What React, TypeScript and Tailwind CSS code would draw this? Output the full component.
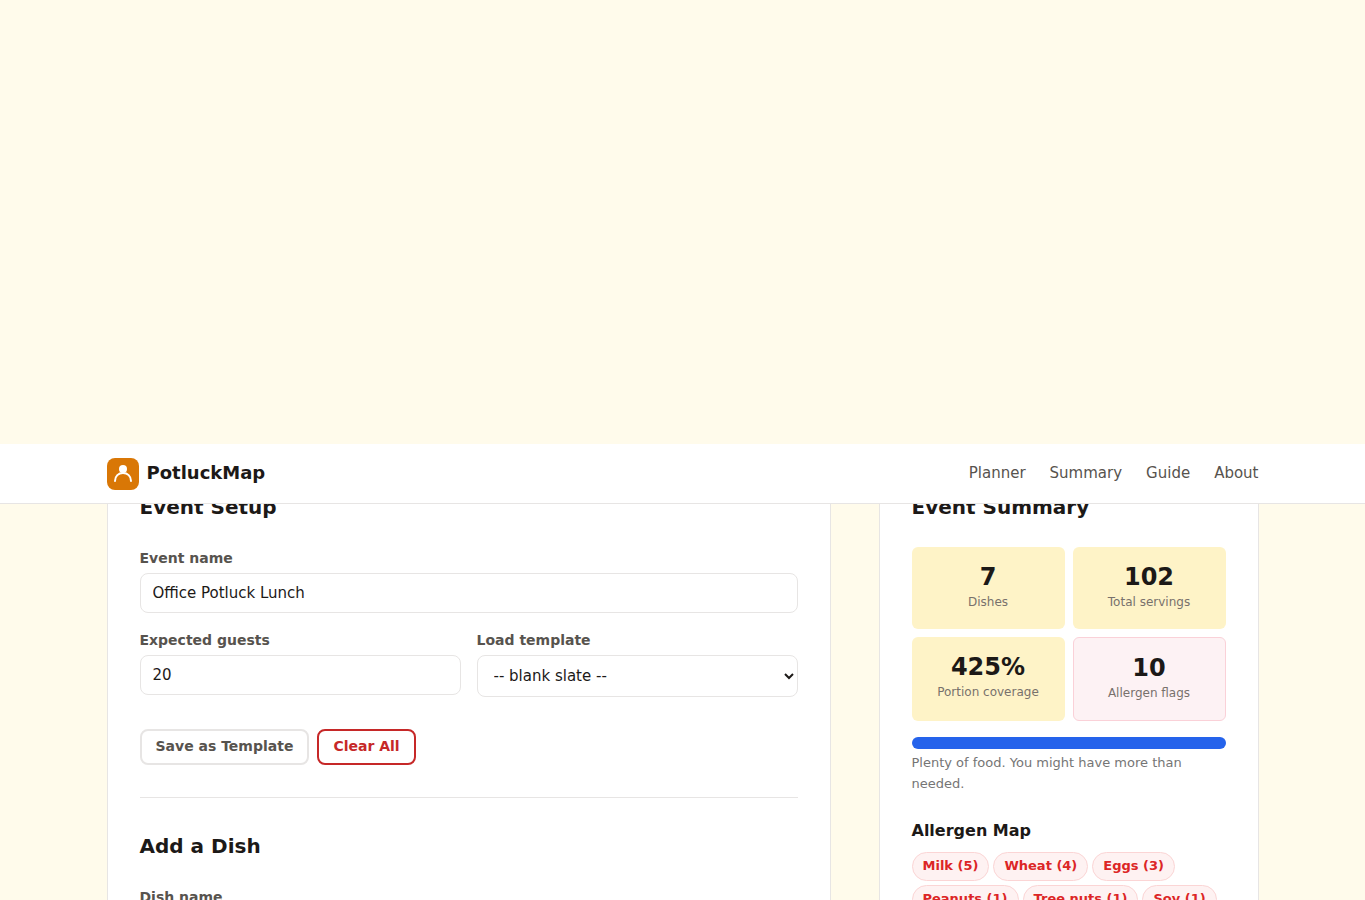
const Label = ({ children }: { children: React.ReactNode }) => (
  <label className="block mb-1 text-sm font-bold leading-[21px] text-[#57534e]">{children}</label>
);

const inputCls =
  "block w-full h-10 px-3 text-[15px] text-[#1c1917] bg-white border border-[#e7e5e4] rounded-lg outline-none";

const Stat = ({ value, label, warn }: { value: string; label: string; warn?: boolean }) => (
  <div
    className={
      warn
        ? "flex flex-col items-center rounded-md border border-[#fad1d8] bg-[#fdf2f4] pt-3 h-[84px]"
        : "flex flex-col items-center rounded-md bg-[#fef3c7] pt-3 pb-[18px]"
    }
  >
    <div className="text-2xl font-bold leading-9 text-[#1c1917]">{value}</div>
    <div className="-mt-0.5 text-xs leading-[18px] text-[#78716c]">{label}</div>
  </div>
);

const Pill = ({ children }: { children: React.ReactNode }) => (
  <span className="rounded-full border border-[#fbd5d5] bg-[#fef2f2] px-2.5 pt-1 pb-1.5 text-[13px] font-bold leading-[17px] text-[#dc2626]">
    {children}
  </span>
);

export default function App() {
  return (
    <div className="h-[900px] overflow-hidden bg-[#fffbeb] font-['DejaVu_Sans',sans-serif]">
      <div className="h-[444px]" />

      {/* Header */}
      <header className="relative z-10 h-[60px] bg-white border-b border-[#e7e5e4]">
        <div className="mx-auto flex h-full max-w-6xl items-center justify-between">
          <div className="flex items-center gap-2">
            <div className="flex h-8 w-8 items-center justify-center rounded-lg bg-[#d97706]">
              <svg viewBox="0 0 32 32" className="h-8 w-8" fill="none">
                <circle cx="16" cy="11" r="4" fill="#fff" />
                <path d="M8 23c0-5 3.5-8 8-8s8 3 8 8" stroke="#fff" strokeWidth="2" strokeLinecap="round" />
              </svg>
            </div>
            <span className="-mt-0.5 text-lg font-bold text-[#1c1917]">PotluckMap</span>
          </div>
          <nav className="flex gap-6 text-[15px] text-[#57534e]">
            <a>Planner</a>
            <a>Summary</a>
            <a>Guide</a>
            <a>About</a>
          </nav>
        </div>
      </header>

      {/* Main */}
      <main className="mx-auto -mt-[44px] grid max-w-6xl grid-cols-[724px_380px] gap-12">
        <section className="rounded-xl border border-[#e7e5e4] bg-white px-8 pt-[31px] pb-8">
          <h2 className="mb-[26px] text-xl font-bold leading-[30px] text-[#1c1917]">Event Setup</h2>
          <div className="mb-[17px]">
            <Label>Event name</Label>
            <input className={inputCls} defaultValue="Office Potluck Lunch" />
          </div>
          <div className="grid grid-cols-2 gap-4">
            <div>
              <Label>Expected guests</Label>
              <input className={inputCls} defaultValue="20" />
            </div>
            <div>
              <Label>Load template</Label>
              <select className="block w-full h-[42px] px-3 text-[15px] text-[#1c1917] bg-white border border-[#e7e5e4] rounded-lg">
                <option>-- blank slate --</option>
              </select>
            </div>
          </div>
          <div className="mt-8 flex gap-2">
            <button className="h-9 rounded-lg border-2 border-[#e7e5e4] bg-white px-3.5 pb-0.5 text-sm font-bold text-[#57534e]">
              Save as Template
            </button>
            <button className="h-9 rounded-lg border-2 border-[#c62828] bg-white px-3.5 pb-0.5 text-sm font-bold text-[#c62828]">
              Clear All
            </button>
          </div>
          <hr className="mt-8 mb-[33px] border-[#e7e5e4]" />
          <h2 className="mb-[26px] text-xl font-bold leading-[30px] text-[#1c1917]">Add a Dish</h2>
          <Label>Dish name</Label>
          <input className={inputCls} />
        </section>

        <aside className="rounded-xl border border-[#e7e5e4] bg-white px-8 pt-[31px] pb-8">
          <h2 className="mb-[25px] text-xl font-bold leading-[30px] text-[#1c1917]">Event Summary</h2>
          <div className="grid grid-cols-2 gap-2">
            <Stat value="7" label="Dishes" />
            <Stat value="102" label="Total servings" />
            <Stat value="425%" label="Portion coverage" />
            <Stat value="10" label="Allergen flags" warn />
          </div>
          <div className="mt-4 h-3 rounded-full bg-[#2563eb]" />
          <p className="mt-1 text-[13px] leading-[20.8px] text-[#757575]">
            Plenty of food. You might have more than needed.
          </p>
          <h3 className="mt-6 mb-[9px] text-base font-bold leading-6 text-[#1c1917]">Allergen Map</h3>
          <div className="flex flex-wrap gap-x-1 gap-y-1">
            <Pill>Milk (5)</Pill>
            <Pill>Wheat (4)</Pill>
            <Pill>Eggs (3)</Pill>
            <Pill>Peanuts (1)</Pill>
            <Pill>Tree nuts (1)</Pill>
            <Pill>Soy (1)</Pill>
          </div>
        </aside>
      </main>
    </div>
  );
}
